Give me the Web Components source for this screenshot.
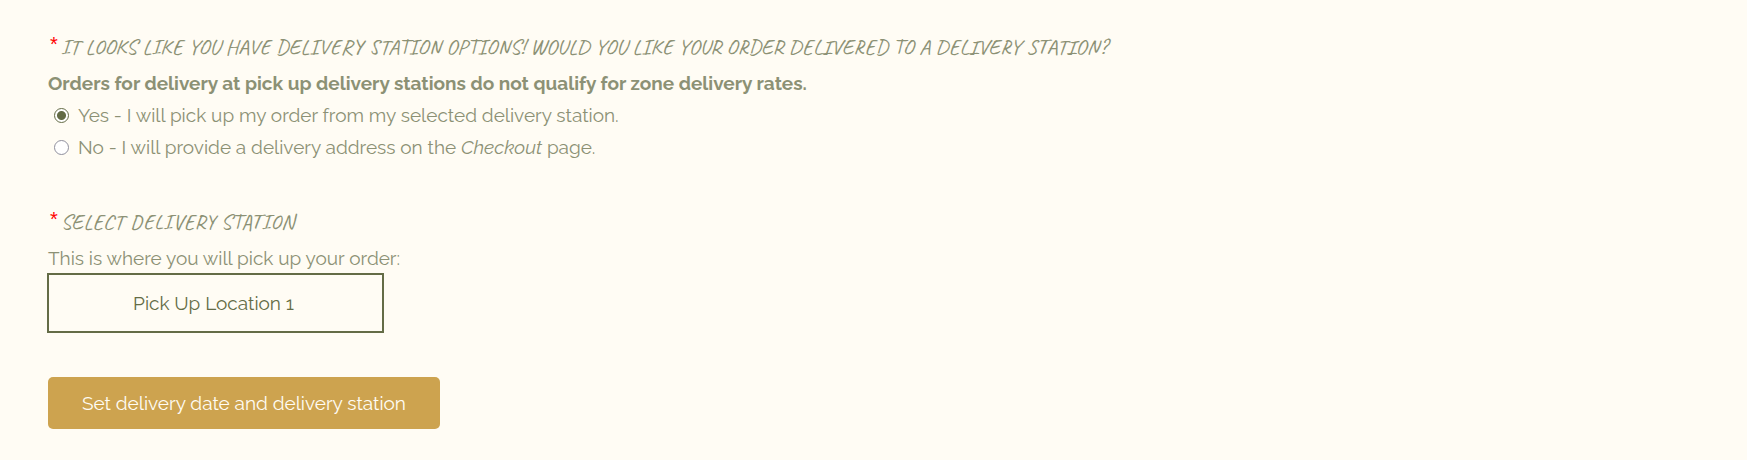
<!DOCTYPE html>
<html lang="en">
<head>
<meta charset="utf-8">
<title>Delivery station</title>
<style>
body { margin: 0; background: #fffcf4; color: #8c9175; font: 19px/32px Raleway, Lato, "Open Sans", sans-serif; }
</style>
</head>
<body>
<delivery-form></delivery-form>
<script>
customElements.define('field-heading', class extends HTMLElement {
  constructor() {
    super();
    this.attachShadow({ mode: 'open' }).innerHTML = `
      <style>
        :host { display: block; }
        h2 { display: flex; gap: 3px; margin: 0; padding-left: 2px; font: 400 22px/40px Caveat, Lato, sans-serif; text-transform: uppercase; }
        .star { color: #f00; font: 400 20px/34px "Liberation Sans", sans-serif; }
      </style>
      <h2><span class="star">*</span><span><slot></slot></span></h2>`;
  }
});

customElements.define('radio-option', class extends HTMLElement {
  constructor() {
    super();
    this.attachShadow({ mode: 'open' }).innerHTML = `
      <style>
        :host { display: block; }
        label { display: flex; align-items: center; gap: 9px; padding-left: 6px; }
        input { appearance: none; flex: none; box-sizing: border-box; width: 15px; height: 15px; margin: 0; border: 1px solid #8f8f9d; border-radius: 50%; background: #fff; }
        input:checked { border-color: #646c46; background: radial-gradient(circle, #646c46 4px, #fff 5px); }
      </style>
      <label><input type="radio"><span><slot></slot></span></label>`;
    this.input = this.shadowRoot.querySelector('input');
  }
  connectedCallback() {
    this.input.name = this.getAttribute('name');
    this.input.checked = this.hasAttribute('checked');
    this.input.addEventListener('change', () => {
      for (const other of this.parentNode.querySelectorAll('radio-option'))
        if (other !== this) other.input.checked = false;
    });
  }
});

customElements.define('station-select', class extends HTMLElement {
  constructor() {
    super();
    this.attachShadow({ mode: 'open' }).innerHTML = `
      <style>
        :host { display: block; }
        label { display: block; }
        select { appearance: none; display: block; box-sizing: border-box; width: 337px; max-width: 100%; margin: -1px 0 0 -1px; padding: 12px 16px 12px 12px; border: 2px solid #646c46; border-radius: 0; background: transparent; color: #646c46; font: inherit; text-align: center; text-align-last: center; }
      </style>
      <label for="station"><slot></slot></label>
      <select id="station"><option>Pick Up Location 1</option></select>`;
  }
});

customElements.define('submit-button', class extends HTMLElement {
  constructor() {
    super();
    this.attachShadow({ mode: 'open' }).innerHTML = `
      <style>
        :host { display: block; }
        button { padding: 10px 34px; border: 0; border-radius: 5px; background: #cda34f; color: #fffcf4; font: inherit; }
      </style>
      <button type="button"><slot></slot></button>`;
  }
});

customElements.define('delivery-form', class extends HTMLElement {
  constructor() {
    super();
    this.attachShadow({ mode: 'open' }).innerHTML = `
      <style>
        :host { display: block; padding: 27px 48px 31px; }
        section { margin-bottom: 39px; }
        .station { margin-bottom: 44px; }
        p { margin: 0; font-weight: 700; }
      </style>
      <form>
        <section>
          <field-heading>It looks like you have delivery station options! Would you like your order delivered to a delivery station?</field-heading>
          <p>Orders for delivery at pick up delivery stations do not qualify for zone delivery rates.</p>
          <radio-option name="pickup" checked>Yes - I will pick up my order from my selected delivery station.</radio-option>
          <radio-option name="pickup">No - I will provide a delivery address on the <em>Checkout</em> page.</radio-option>
        </section>
        <section class="station">
          <field-heading>Select delivery station</field-heading>
          <station-select>This is where you will pick up your order:</station-select>
        </section>
        <submit-button>Set delivery date and delivery station</submit-button>
      </form>`;
  }
});
</script>
</body>
</html>
